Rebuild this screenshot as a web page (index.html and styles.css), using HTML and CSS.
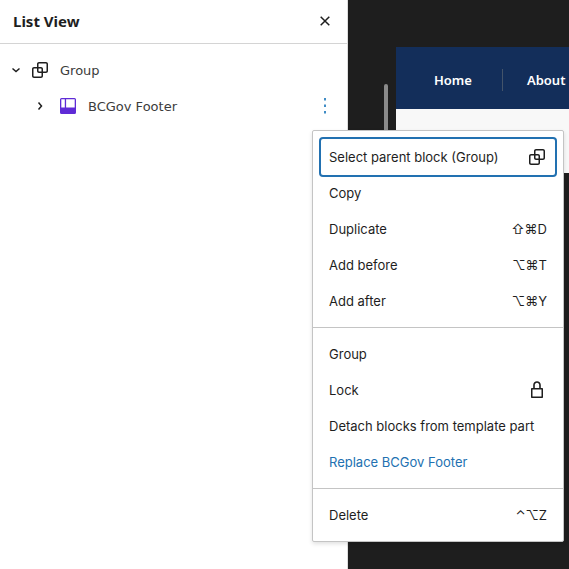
FILE: index.html
```html
<!DOCTYPE html>
<html lang="en">
<head>
<meta charset="utf-8">
<title>List View</title>
<link rel="stylesheet" href="styles.css">
</head>
<body>
<svg class="defs" aria-hidden="true">
  <symbol id="group" viewBox="0 0 24 24"><path d="M18 4h-7c-1.1 0-2 .9-2 2v3H6c-1.1 0-2 .9-2 2v7c0 1.1.9 2 2 2h7c1.1 0 2-.9 2-2v-3h3c1.1 0 2-.9 2-2V6c0-1.1-.9-2-2-2zm-4.500 14c0 .3-.2.5-.5.5H6c-.3 0-.5-.2-.5-.5v-7c0-.3.2-.5.5-.5h3V13c0 1.100.9 2 2 2h2.500v3zm0-4.500H11c-.3 0-.5-.2-.5-.5v-2.500H13c.3 0 .5.2.5.5v2.500zm5-.5c0 .3-.2.5-.5.5h-3V11c0-1.100-.9-2-2-2h-2.500V6c0-.3.2-.5.5-.5h7c.3 0 .5.2.5.5v7z"/></symbol>
</svg>
<div class="editor">
  <aside class="panel">
    <header class="panel-header">
      <h1>List View</h1>
      <button class="icon-button" aria-label="Close">
        <svg class="icon" viewBox="0 0 24 24"><path class="line" d="M7.700 7.700l8.600 8.600M16.300 7.700l-8.600 8.600"/></svg>
      </button>
    </header>
    <ul class="tree">
      <li class="row">
        <button class="toggle" aria-label="Collapse"><svg class="icon" viewBox="0 0 24 24"><path class="line" d="M8.500 10.500L12 13.500l3.500-3"/></svg></button>
        <svg class="icon"><use href="#group"/></svg>
        <a href="#">Group</a>
      </li>
      <li class="row nested">
        <button class="toggle" aria-label="Expand"><svg class="icon" viewBox="0 0 24 24"><path class="line" d="M10.500 8.500l3 3.500-3 3.500"/></svg></button>
        <svg class="icon part" viewBox="0 0 24 24"><path fill-rule="evenodd" d="M5.500 4h13A1.500 1.500 0 0120 5.500v13a1.500 1.500 0 01-1.500 1.500h-13A1.500 1.500 0 014 18.500v-13A1.500 1.500 0 015.500 4zM5.300 5.300V13.500H8.800V5.300zM10.100 5.300V13.500h8.600V5.300z"/></svg>
        <a href="#">BCGov Footer</a>
        <button class="icon-button more" aria-label="Options"><svg class="icon" viewBox="0 0 24 24"><path d="M11 4h2v2.500h-2zM11 10.500h2V13h-2zM11 17h2v2.500h-2z"/></svg></button>
      </li>
    </ul>
  </aside>
  <main class="canvas">
    <div class="scrollbar"></div>
    <div class="site">
      <nav class="site-nav">
        <a href="#">Home</a>
        <a href="#">About</a>
      </nav>
    </div>
  </main>
  <div class="menu" role="menu">
    <div class="section">
      <button class="item focused" role="menuitem">Select parent block (Group)<svg class="icon"><use href="#group"/></svg></button>
      <button class="item" role="menuitem">Copy</button>
      <button class="item" role="menuitem">Duplicate<kbd>⇧⌘D</kbd></button>
      <button class="item" role="menuitem">Add before<kbd>⌥⌘T</kbd></button>
      <button class="item" role="menuitem">Add after<kbd>⌥⌘Y</kbd></button>
    </div>
    <div class="section">
      <button class="item" role="menuitem">Group</button>
      <button class="item" role="menuitem">Lock<svg class="icon" viewBox="0 0 24 24"><path d="M17 10h-1.200V7c0-2.100-1.700-3.800-3.800-3.800S8.200 4.900 8.200 7v3H7c-.6 0-1 .4-1 1v8c0 .6.4 1 1 1h10c.6 0 1-.4 1-1v-8c0-.6-.4-1-1-1zM9.800 7c0-1.200 1-2.200 2.200-2.200s2.200 1 2.200 2.200v3H9.800V7zm6.700 11.500h-9v-7h9v7z"/></svg></button>
      <button class="item" role="menuitem">Detach blocks from template part</button>
      <button class="item link" role="menuitem">Replace BCGov Footer</button>
    </div>
    <div class="section">
      <button class="item" role="menuitem">Delete<kbd>⌃⌥Z</kbd></button>
    </div>
  </div>
</div>
</body>
</html>
```

FILE: styles.css
```css
* {
  box-sizing: border-box;
}

body {
  margin: 0;
  background: #1e1e1e;
  color: #1e1e1e;
  font-family: "Noto Sans", sans-serif;
  font-size: 13px;
}

button {
  border: 0;
  padding: 0;
  background: none;
  color: inherit;
  font: inherit;
  cursor: pointer;
}

.defs {
  position: absolute;
  width: 0;
  height: 0;
}

.icon {
  display: block;
  flex: none;
  width: 24px;
  height: 24px;
  fill: currentColor;
}

.line {
  fill: none;
  stroke: currentColor;
  stroke-width: 1.5;
}

.editor {
  position: relative;
  display: grid;
  grid-template-columns: 348px 1fr;
  min-height: 100vh;
  overflow: hidden;
}

.panel {
  background: #fff;
  border-right: 1px solid #ddd;
}

.panel-header {
  display: flex;
  align-items: center;
  justify-content: space-between;
  height: 44px;
  padding: 0 10px 2px 13px;
  border-bottom: 1px solid #d4d4d4;
}

.panel-header h1 {
  margin: 0;
  font-size: 15px;
  font-weight: 700;
  line-height: 20px;
}

.tree {
  margin: 0;
  padding: 8px 10px 8px 4px;
  list-style: none;
  font-family: "DejaVu Sans", sans-serif;
}

.row {
  display: flex;
  align-items: center;
  height: 36px;
}

.row a {
  flex: 1;
  margin-left: 8px;
  color: #3c3c3c;
  text-decoration: none;
}

.nested {
  padding-left: 24px;
}

.nested .part {
  margin-left: 4px;
  color: #5f2bd6;
}

.more {
  color: #3f8cc5;
}

.canvas {
  display: flex;
  gap: 8px;
  padding: 47px 0 0 36px;
}

.scrollbar {
  width: 4px;
  height: 300px;
  margin-top: 37px;
  border-radius: 2px;
  background: #8a8a8a;
}

.site {
  flex: 1;
  height: 126px;
  background: #f8f8f8;
}

.site-nav {
  display: flex;
  align-items: center;
  height: 62px;
  padding-top: 4px;
  background: #132e5a;
}

.site-nav a {
  flex: none;
  padding: 0 30px 0 38px;
  color: #fff;
  font-weight: 600;
  line-height: 22px;
  text-decoration: none;
}

.site-nav a + a {
  padding-left: 24px;
  border-left: 1px solid #44546a;
}

.menu {
  position: absolute;
  top: 130px;
  right: 5px;
  width: 252px;
  border: 1px solid #c4c4c4;
  border-radius: 2px;
  background: #fff;
  box-shadow: 0 2px 4px rgba(0, 0, 0, 0.12);
  font-family: Inter, sans-serif;
}

.section {
  padding: 8px;
}

.section + .section {
  border-top: 1px solid #c4c4c4;
}

.item {
  display: flex;
  align-items: center;
  justify-content: space-between;
  width: 100%;
  height: 36px;
  padding: 0 8px;
  text-align: left;
  white-space: nowrap;
}

.item .icon {
  margin-right: -2px;
}

.item kbd {
  font: inherit;
}

.focused {
  border-radius: 2px;
  box-shadow: 0 0 0 2px #2271b1;
}

.link {
  color: #2271b1;
}
```
